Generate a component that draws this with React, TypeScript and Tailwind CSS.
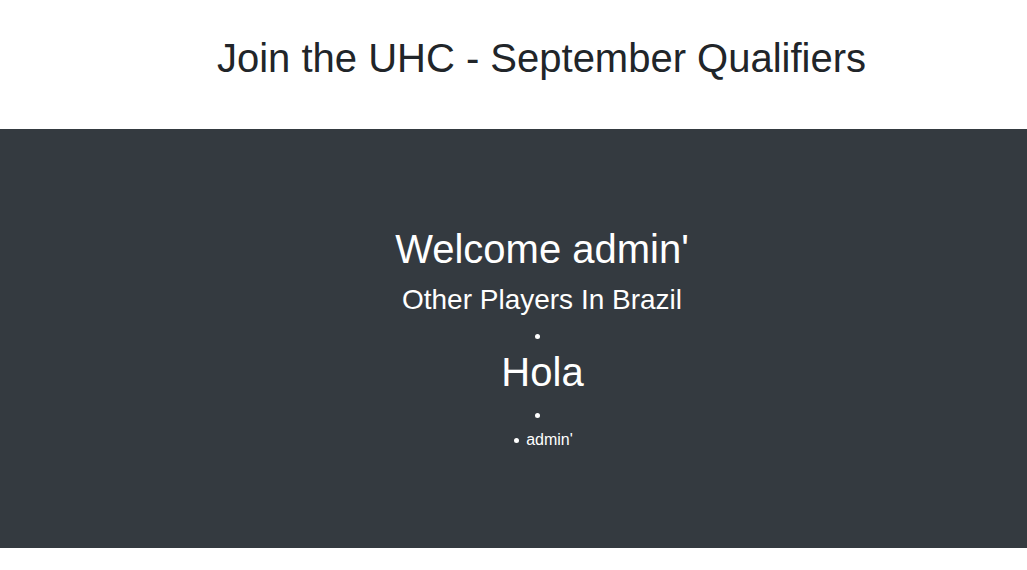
import React from 'react';

const Dot: React.FC<{ className?: string }> = ({ className = '' }) => (
    <span className={`block w-[5px] h-[5px] rounded-full bg-white ${className}`}></span>
);

const App: React.FC = () => {
    return (
        <div className="min-h-[570px] bg-white" style={{ fontFamily: '"Liberation Sans", Arial, sans-serif' }}>
            <header className="h-[129px] pt-[34px] pl-[56px] text-center">
                <h1 className="text-[40px] leading-[48px] text-[#212529]">
                    Join the UHC - September Qualifiers
                </h1>
            </header>

            <main className="h-[419px] bg-[#343a40] text-white flex flex-col items-center pt-[96px] pl-[56px]">
                <h1 className="text-[40px] leading-[48px] pl-[1px]">Welcome admin'</h1>
                <h3 className="text-[28px] leading-[34px] mt-[10px] pl-[1px]">Other Players In Brazil</h3>
                <ul className="flex flex-col items-center">
                    <li className="flex flex-col items-center">
                        <Dot className="mt-[17px] mr-[7px]" />
                        <span className="text-[40px] leading-[48px] mt-[9px] pl-[2px]">Hola</span>
                    </li>
                    <li className="flex flex-col items-center">
                        <Dot className="mt-[17px] mr-[7px]" />
                    </li>
                    <li className="flex items-center gap-[7px] mt-[10px] text-[16px] leading-[24px] pl-[4px]">
                        <Dot />
                        <span>admin'</span>
                    </li>
                </ul>
            </main>
        </div>
    );
};

export default App;
